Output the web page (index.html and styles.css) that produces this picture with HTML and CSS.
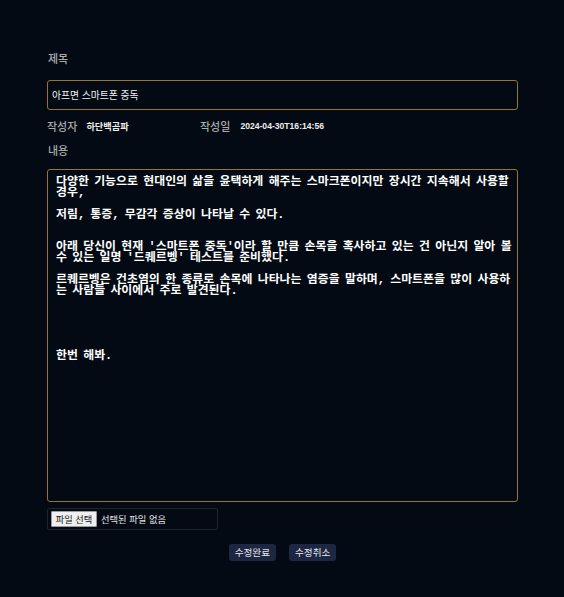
FILE: index.html
```html
<!DOCTYPE html>
<html lang="ko">
<head>
<meta charset="utf-8">
<link rel="stylesheet" href="styles.css">
</head>
<body>
<div class="form">
  <div class="label first">제목</div>
  <input class="title-input" type="text" value="아프면 스마트폰 중독">
  <div class="meta">
    <div class="meta-item author">
      <span class="meta-label">작성자</span>
      <span class="meta-value">하단백곰파</span>
    </div>
    <div class="meta-item date">
      <span class="meta-label">작성일</span>
      <span class="meta-value num">2024-04-30T16:14:56</span>
    </div>
  </div>
  <div class="label content-label">내용</div>
  <textarea class="content">다양한 기능으로 현대인의 삶을 윤택하게 해주는 스마크폰이지만 장시간 지속해서 사용할 경우,

저림, 통증, 무감각 증상이 나타날 수 있다.


아래 당신이 현재 '스마트폰 중독'이라 할 만큼 손목을 혹사하고 있는 건 아닌지 알아 볼 수 있는 일명 '드퀘르벵' 테스트를 준비했다.

르퀘르벵은 건초염의 한 종류로 손목에 나타나는 염증을 말하며, 스마트폰을 많이 사용하는 사람들 사이에서 주로 발견된다.





한번 해봐.</textarea>
  <div class="file-box">
    <span class="file-btn">파일 선택</span>
    <span class="file-text">선택된 파일 없음</span>
  </div>
  <div class="actions">
    <button class="btn" type="button">수정완료</button>
    <button class="btn" type="button">수정취소</button>
  </div>
</div>
</body>
</html>
```

FILE: styles.css
```css
html, body {
  margin: 0;
  padding: 0;
  background: #030a13;
}

body {
  font-family: "Noto Sans CJK KR", "Noto Sans", sans-serif;
  color: #e8e8e8;
}

.form {
  width: 471px;
  margin-left: 47px;
  padding-top: 51px;
}

.label {
  font-size: 11px;
  font-weight: 500;
  line-height: 14px;
  color: #ababab;
  padding-left: 1px;
}

.title-input {
  display: block;
  box-sizing: border-box;
  width: 471px;
  height: 30px;
  margin: 15px 0 0;
  padding: 0 4px;
  border: 1px solid #98752f;
  border-radius: 3px;
  background: #030a13;
  color: #f2f2f2;
  font-family: "Noto Sans CJK KR", sans-serif;
  font-size: 9.8px;
  outline: none;
}

.meta {
  display: flex;
  margin-top: 9px;
  height: 14px;
  align-items: center;
}

.meta-item {
  display: flex;
  align-items: center;
}

.meta-item.author {
  width: 153px;
}

.meta-label {
  font-size: 11px;
  font-weight: 500;
  line-height: 14px;
  color: #ababab;
}

.author .meta-label {
  margin-right: 9px;
}

.date .meta-label {
  margin-right: 10px;
}

.meta-value {
  font-size: 9.2px;
  font-weight: bold;
  color: #eeeeee;
}

.meta-value.num {
  font-family: "Liberation Sans", Arial, sans-serif;
  font-size: 8.6px;
}

.content-label {
  margin-top: 10px;
}

.content {
  display: block;
  box-sizing: border-box;
  width: 471px;
  height: 333px;
  margin: 12px 0 0;
  padding: 7px 3px 7px 8px;
  border: 1px solid #98752f;
  border-radius: 3px;
  background: #030a13;
  color: #ffffff;
  font-family: "Liberation Mono", "Noto Sans CJK KR", monospace;
  font-size: 11.9px;
  font-weight: bold;
  line-height: 10.88px;
  word-spacing: -1.8px;
  resize: none;
  outline: none;
  overflow: hidden;
}

.file-box {
  box-sizing: border-box;
  width: 171px;
  height: 22px;
  margin-top: 6px;
  border: 1px solid #1d242d;
  border-radius: 2px;
  display: flex;
  align-items: center;
  padding-left: 3px;
}

.file-btn {
  box-sizing: border-box;
  width: 46px;
  height: 16px;
  text-align: center;
  background: #efefef;
  border: 1px solid #9a9a9a;
  border-radius: 1px;
  color: #111;
  font-size: 9.2px;
  line-height: 14px;
}

.file-text {
  margin-left: 4px;
  font-size: 9.3px;
  color: #e6e6e6;
}

.actions {
  display: flex;
  justify-content: center;
  gap: 13px;
  width: 471px;
  margin-top: 14px;
}

.btn {
  box-sizing: border-box;
  height: 17px;
  padding: 0 6px;
  border: none;
  border-radius: 3px;
  background: #1d2744;
  color: #e8e8e8;
  font-family: "Noto Sans CJK KR", sans-serif;
  font-size: 9.6px;
  line-height: 17px;
  cursor: pointer;
}
```
